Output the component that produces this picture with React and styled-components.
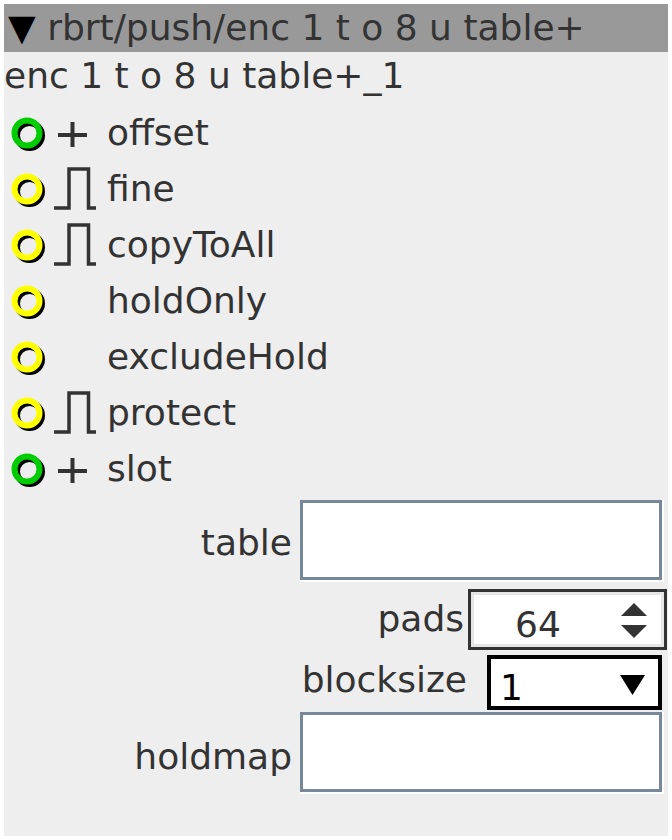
import React from 'react';
import styled, { createGlobalStyle } from 'styled-components';

const GlobalStyle = createGlobalStyle`
    html, body {
        margin: 0;
        padding: 0;
        background: #ffffff;
    }
    body {
        font-family: "DejaVu Sans", "Liberation Sans", sans-serif;
    }
`;

const params = [
    { name: 'offset', color: '#00cc00', icon: 'plus' },
    { name: 'fine', color: '#ffff00', icon: 'pulse' },
    { name: 'copyToAll', color: '#ffff00', icon: 'pulse' },
    { name: 'holdOnly', color: '#ffff00', icon: null },
    { name: 'excludeHold', color: '#ffff00', icon: null },
    { name: 'protect', color: '#ffff00', icon: 'pulse' },
    { name: 'slot', color: '#00cc00', icon: 'plus' },
];

function Ring({ color }) {
    return (
        <RingSlot viewBox="0 0 38 38">
            <circle cx="20.5" cy="20.5" r="12.5" fill="none" stroke="#000" strokeWidth="6" />
            <circle cx="18" cy="18" r="12.5" fill="none" stroke={color} strokeWidth="6" />
        </RingSlot>
    );
}

function ParamIcon({ kind }) {
    return (
        <IconSlot viewBox="0 0 50 44">
            {kind === 'plus' && (
                <g stroke="#333" strokeWidth="4" fill="none">
                    <line x1="8" y1="25" x2="37" y2="25" />
                    <line x1="22.5" y1="12" x2="22.5" y2="37" />
                </g>
            )}
            {kind === 'pulse' && (
                <path d="M4 42 H19 V3 H38.5 V42 H46" stroke="#333" strokeWidth="3.5" fill="none" />
            )}
        </IconSlot>
    );
}

function App() {
    return (
        <>
            <GlobalStyle />
            <Panel>
                <TitleBar>
                    <Caret>▼</Caret> rbrt/push/enc 1 t o 8 u table+
                </TitleBar>
                <Subtitle>enc 1 t o 8 u table+_1</Subtitle>
                <ParamList>
                    {params.map((p) => (
                        <ParamRow key={p.name}>
                            <Ring color={p.color} />
                            <ParamIcon kind={p.icon} />
                            <ParamLabel>{p.name}</ParamLabel>
                        </ParamRow>
                    ))}
                </ParamList>

                <FieldRow $top={4} $right={4}>
                    <FieldLabel $shift={1} $gap={8}>table</FieldLabel>
                    <Bevel>
                        <TextBox />
                    </Bevel>
                </FieldRow>

                <FieldRow $top={7} $right={1}>
                    <FieldLabel $shift={-1} $gap={4}>pads</FieldLabel>
                    <SpinBox>
                        <SpinValue>64</SpinValue>
                        <SpinArrows viewBox="0 0 26 36">
                            <polygon points="13,0 26,13 0,13" fill="#333" />
                            <polygon points="0,22 26,22 13,35" fill="#333" />
                        </SpinArrows>
                    </SpinBox>
                </FieldRow>

                <FieldRow $top={5} $right={6}>
                    <FieldLabel $shift={-3} $gap={20}>blocksize</FieldLabel>
                    <Select>
                        <SelectValue>1</SelectValue>
                        <SelectArrow viewBox="0 0 25 20">
                            <polygon points="0,0 25,0 12.5,20" fill="#000" />
                        </SelectArrow>
                    </Select>
                </FieldRow>

                <FieldRow $top={2} $right={4}>
                    <FieldLabel $shift={3} $gap={8}>holdmap</FieldLabel>
                    <Bevel>
                        <TextBox />
                    </Bevel>
                </FieldRow>
            </Panel>
        </>
    );
}

const Panel = styled.div`
    margin: 4px;
    width: 664px;
    height: 832px;
    background: #eeeeee;
    color: #333333;
    font-family: "DejaVu Sans", "Liberation Sans", sans-serif;
    font-size: 36px;
    display: flex;
    flex-direction: column;
`;

const TitleBar = styled.div`
    height: 48px;
    line-height: 48px;
    padding-left: 4px;
    background: #999999;
    color: #333333;
    white-space: nowrap;
`;

const Caret = styled.span`
    color: #000000;
`;

const Subtitle = styled.div`
    height: 52px;
    line-height: 48px;
    white-space: nowrap;
`;

const ParamList = styled.div`
    display: flex;
    flex-direction: column;
`;

const ParamRow = styled.div`
    height: 56px;
    display: flex;
    align-items: center;
    padding-left: 5px;
`;

const RingSlot = styled.svg`
    width: 38px;
    height: 38px;
    margin-top: 3px;
    flex: none;
`;

const IconSlot = styled.svg`
    width: 50px;
    height: 44px;
    margin-left: 3px;
    flex: none;
`;

const ParamLabel = styled.span`
    margin-left: 7px;
    line-height: 53px;
    white-space: nowrap;
`;

const FieldRow = styled.div`
    display: flex;
    align-items: center;
    justify-content: flex-end;
    margin-top: ${(p) => p.$top}px;
    padding-right: ${(p) => p.$right}px;
`;

const FieldLabel = styled.span`
    margin-right: ${(p) => p.$gap}px;
    position: relative;
    top: ${(p) => p.$shift}px;
    white-space: nowrap;
`;

const Bevel = styled.div`
    border-style: solid;
    border-width: 0 2px 2px 0;
    border-color: transparent #ffffff #ffffff transparent;
`;

const TextBox = styled.div`
    box-sizing: border-box;
    width: 362px;
    height: 80px;
    background: #ffffff;
    border: 3px solid #778899;
`;

const SpinBox = styled.div`
    box-sizing: border-box;
    width: 199px;
    height: 61px;
    display: flex;
    align-items: center;
    background: #ffffff;
    border: 3px solid #333333;
    box-shadow: inset 0 0 0 3px #e6e6e6;
`;

const SpinValue = styled.span`
    flex: 1;
    text-align: center;
    padding-top: 10px;
    padding-left: 4px;
    line-height: 42px;
`;

const SpinArrows = styled.svg`
    width: 26px;
    height: 36px;
    margin: 2px 17px 0 20px;
    flex: none;
`;

const Select = styled.div`
    box-sizing: border-box;
    width: 175px;
    height: 55px;
    display: flex;
    align-items: center;
    background: #ffffff;
    border: 4px solid #000000;
    color: #000000;
`;

const SelectValue = styled.span`
    flex: 1;
    padding-left: 9px;
    padding-top: 10px;
    line-height: 42px;
`;

const SelectArrow = styled.svg`
    width: 25px;
    height: 20px;
    margin: 4px 13px 0 0;
    flex: none;
`;

export default App;
